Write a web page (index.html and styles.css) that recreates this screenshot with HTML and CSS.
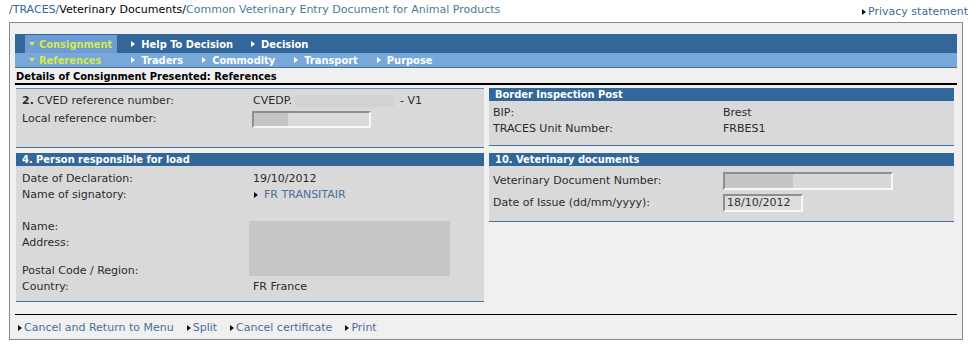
FILE: index.html
```html
<!DOCTYPE html>
<html lang="en">
<head>
<meta charset="utf-8">
<title>Common Veterinary Entry Document for Animal Products</title>
<link rel="stylesheet" href="styles.css">
</head>
<body>
<header class="topbar">
  <div class="crumbs"><a class="crumb-link">/TRACES/</a><span class="crumb-current">Veterinary Documents/</span><a class="crumb-page">Common Veterinary Entry Document for Animal Products</a></div>
  <a class="privacy"><span class="tri tri-right tri-dark"></span>Privacy statement</a>
</header>
<main class="frame">
  <nav class="menu">
    <div class="menu-main">
      <span class="tab tab-active"><span class="tri tri-down"></span>Consignment</span>
      <span class="tab"><span class="tri tri-right"></span>Help To Decision</span>
      <span class="tab"><span class="tri tri-right"></span>Decision</span>
    </div>
    <div class="menu-sub">
      <span class="subtab subtab-active"><span class="tri tri-down"></span>References</span>
      <span class="subtab"><span class="tri tri-right"></span>Traders</span>
      <span class="subtab"><span class="tri tri-right"></span>Commodity</span>
      <span class="subtab"><span class="tri tri-right"></span>Transport</span>
      <span class="subtab"><span class="tri tri-right"></span>Purpose</span>
    </div>
  </nav>
  <h1 class="page-title">Details of Consignment Presented: References</h1>
  <div class="columns">
    <div class="col col-left">
      <section class="panel panel-plain">
        <div class="panel-body body-refs">
          <span class="label"><b>2.</b> CVED reference number:</span>
          <span class="value">CVEDP.<span class="redact redact-cved"></span>- V1</span>
          <span class="label">Local reference number:</span>
          <span class="value"><span class="field field-local"><span class="field-redact field-redact-local"></span></span></span>
        </div>
      </section>
      <section class="panel">
        <h2 class="panel-head">4. Person responsible for load</h2>
        <div class="panel-body body-person">
          <span class="label">Date of Declaration:</span>
          <span class="value">19/10/2012</span>
          <span class="label">Name of signatory:</span>
          <span class="value"><a class="link"><span class="tri tri-right tri-dark"></span>FR TRANSITAIR</a></span>
          <span class="label row-name">Name:</span>
          <span class="label row-address">Address:</span>
          <span class="redact redact-name"></span>
          <span class="label row-postal">Postal Code / Region:</span>
          <span class="label row-country">Country:</span>
          <span class="value row-country">FR France</span>
        </div>
      </section>
    </div>
    <div class="col col-right">
      <section class="panel">
        <h2 class="panel-head">Border Inspection Post</h2>
        <div class="panel-body body-bip">
          <span class="label">BIP:</span>
          <span class="value">Brest</span>
          <span class="label">TRACES Unit Number:</span>
          <span class="value">FRBES1</span>
        </div>
      </section>
      <section class="panel">
        <h2 class="panel-head">10. Veterinary documents</h2>
        <div class="panel-body body-vet">
          <span class="label">Veterinary Document Number:</span>
          <span class="value"><span class="field field-vetdoc"><span class="field-redact field-redact-vet"></span></span></span>
          <span class="label">Date of Issue (dd/mm/yyyy):</span>
          <span class="value"><span class="field field-date">18/10/2012</span></span>
        </div>
      </section>
    </div>
  </div>
  <footer class="actions">
    <a class="action"><span class="tri tri-right tri-dark"></span>Cancel and Return to Menu</a>
    <a class="action"><span class="tri tri-right tri-dark"></span>Split</a>
    <a class="action"><span class="tri tri-right tri-dark"></span>Cancel certificate</a>
    <a class="action"><span class="tri tri-right tri-dark"></span>Print</a>
  </footer>
</main>
</body>
</html>
```
FILE: styles.css
```css
* { box-sizing: border-box; }

body {
  margin: 0;
  background: #ffffff;
  font-family: "DejaVu Sans", Verdana, sans-serif;
  font-size: 11px;
  color: #2b2b2b;
}

a { text-decoration: none; cursor: pointer; }

/* triangles */
.tri {
  display: inline-block;
  width: 0;
  height: 0;
  flex: none;
}
.tri-right {
  border-top: 3.5px solid transparent;
  border-bottom: 3.5px solid transparent;
  border-left: 4px solid #ffffff;
  margin-right: 6px;
}
.tri-down {
  border-left: 3.5px solid transparent;
  border-right: 3.5px solid transparent;
  border-top: 4px solid #d4ea4f;
  margin-right: 4px;
}
.tri-dark { border-left-color: #111; margin-right: 2px; }

/* top bar */
.topbar {
  display: flex;
  justify-content: space-between;
  align-items: flex-start;
  height: 22px;
  padding: 3px 0 0 9px;
  line-height: 13px;
}
.crumb-link { color: #336699; }
.crumb-current { color: #000; }
.crumb-page { color: #4b7c93; }
.privacy {
  display: flex;
  align-items: center;
  margin-top: 2px;
  color: #3f6a92;
  white-space: nowrap;
}

/* frame */
.frame {
  display: flex;
  flex-direction: column;
  margin-left: 9px;
  width: 954px;
  height: 318px;
  border: 1px solid #8a8a8a;
  background: #f0f0f0;
  padding: 11px 5px 0 5px;
}

/* menu */
.menu-main {
  display: flex;
  align-items: flex-end;
  height: 19px;
  background: #336699;
  padding-left: 10px;
}
.tab {
  display: flex;
  align-items: center;
  height: 18px;
  padding: 0 9px 0 4px;
  margin-right: 5px;
  color: #ffffff;
  font-family: "DejaVu Sans Condensed", "DejaVu Sans", sans-serif;
  font-weight: bold;
}
.tab-active {
  background: #6d9dd2;
  color: #d4ea4f;
  padding-right: 5px;
  margin-right: 10px;
}
.menu-sub {
  display: flex;
  align-items: center;
  height: 15px;
  background: #78a7d9;
  border-bottom: 1px solid #4b6f95;
  padding-left: 14px;
}
.subtab {
  display: flex;
  align-items: center;
  margin-right: 19px;
  color: #ffffff;
  font-family: "DejaVu Sans Condensed", "DejaVu Sans", sans-serif;
  font-weight: bold;
}
.subtab-active { color: #d4ea4f; margin-right: 30px; }

/* title */
.page-title {
  margin: 0;
  padding: 3px 0 0 1px;
  line-height: 12px;
  height: 17px;
  font-size: 11px;
  font-family: "DejaVu Sans Condensed", "DejaVu Sans", sans-serif;
  font-weight: bold;
  color: #000;
  border-bottom: 2px solid #000;
}

/* columns */
.columns {
  display: flex;
  gap: 5px;
  margin-top: 3px;
  padding-left: 1px;
}
.col { display: flex; flex-direction: column; }
.col-left { width: 468px; gap: 5px; }
.col-right { width: 465px; gap: 7px; }

.panel-plain { border-top: 1px solid #6a8cad; }
.panel-head {
  margin: 0;
  height: 13px;
  line-height: 13px;
  padding-left: 6px;
  background: #336699;
  color: #ffffff;
  font-size: 11px;
  font-family: "DejaVu Sans Condensed", "DejaVu Sans", sans-serif;
  font-weight: bold;
}
.panel-body {
  display: grid;
  background: #d9d9d9;
  border-bottom: 1px solid #45709b;
  line-height: 16px;
  align-items: center;
}
.label { grid-column: 1; }
.value { grid-column: 2; display: flex; align-items: center; }

.body-refs {
  grid-template-columns: 231px 1fr;
  grid-template-rows: 16px 20px;
  padding: 4px 6px 18px;
}
.body-person {
  grid-template-columns: 231px 1fr;
  grid-template-rows: 16px 16px 16px 16px 16px 12px 16px 16px;
  padding: 5px 6px 6px;
}
.row-name { grid-row: 4; }
.row-address { grid-row: 5; }
.row-postal { grid-row: 7; }
.row-country { grid-row: 8; }

.body-bip {
  grid-template-columns: 230px 1fr;
  grid-template-rows: 16px 16px;
  padding: 4px 4px 8px;
}
.body-vet {
  grid-template-columns: 230px 1fr;
  grid-template-rows: 22px 22px;
  padding: 4px 4px 7px;
}

/* redactions */
.redact { display: inline-block; background: #cbcbcb; }
.redact-cved { width: 99px; height: 12px; margin: 0 6px 0 3px; background: #d2d2d2; }
.redact-name {
  grid-column: 2;
  grid-row: 4 / 8;
  align-self: stretch;
  width: 201px;
  margin: 2px 0 3px -4px;
  background: #c6c6c6;
}

/* fields */
.field {
  display: inline-flex;
  align-items: center;
  height: 18px;
  border-style: solid;
  border-width: 2px;
  border-color: #8e8e8e #f7f7f7 #f7f7f7 #8e8e8e;
  background: #dadada;
  color: #333;
}
.field-local { width: 119px; height: 17px; margin-left: -1px; margin-top: 1px; }
.field-vetdoc { width: 170px; background: #d8d8d8; }
.field-date { width: 80px; padding-left: 2px; line-height: 14px; background: #dddddd; }
.field-redact { align-self: stretch; background: #c5c5c5; }
.field-redact-local { width: 34px; }
.field-redact-vet { width: 68px; }

.link { display: inline-flex; align-items: center; color: #47709c; padding-left: 1px; }
.link .tri-dark { margin-right: 6px; }

/* footer actions */
.actions {
  margin-top: auto;
  display: flex;
  height: 25px;
  border-top: 1px solid #000;
  padding: 2px 0 0 3px;
  line-height: 14px;
}
.action {
  display: flex;
  align-items: center;
  margin-right: 13px;
  color: #4a6f99;
}
```
